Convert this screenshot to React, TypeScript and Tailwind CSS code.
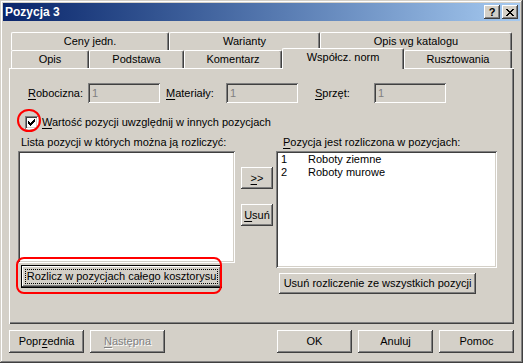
import React from 'react';

const raised =
  'shadow-[inset_-1px_-1px_#404040,inset_1px_1px_#ffffff,inset_-2px_-2px_#808080,inset_2px_2px_#d4d0c8]';
const sunken =
  'shadow-[inset_1px_1px_#808080,inset_-1px_-1px_#ffffff,inset_2px_2px_#404040,inset_-2px_-2px_#d4d0c8]';

function U({ children }: { children: React.ReactNode }) {
  return <span className="underline decoration-1 underline-offset-[2px]">{children}</span>;
}

// small bitmap glyphs (check mark, close cross)
function Pixels({ rows }: { rows: string[] }) {
  const w = rows[0].length;
  const h = rows.length;
  return (
    <svg width={w} height={h} viewBox={`0 0 ${w} ${h}`} shapeRendering="crispEdges">
      {rows.flatMap((r, y) =>
        r.split('').map((c, x) => (c === 'X' ? <rect key={`${x}-${y}`} x={x} y={y} width={1} height={1} fill="#000" /> : null))
      )}
    </svg>
  );
}

const check = ['......X', '.....XX', 'X...XXX', 'XX.XXX.', 'XXXXX..', '.XXX...', '..X....'];
const cross = ['XX....XX', '.XX..XX.', '..XXXX..', '...XX...', '..XXXX..', '.XX..XX.', 'XX....XX'];

function Button({
  children,
  className = '',
  disabled = false,
}: {
  children: React.ReactNode;
  className?: string;
  disabled?: boolean;
}) {
  return (
    <button
      type="button"
      className={`flex items-center justify-center bg-[#d4d0c8] whitespace-nowrap ${raised} ${
        disabled ? 'text-[#808080] [text-shadow:1px_1px_0_#ffffff]' : 'text-black'
      } ${className}`}
    >
      {children}
    </button>
  );
}

function Tab({ label, className = '' }: { label: string; className?: string }) {
  return (
    <div
      className={`flex items-center justify-center bg-[#d4d0c8] border-t border-l border-r border-t-white border-l-white border-r-[#404040] rounded-t-[2px] shadow-[inset_-1px_0_#808080] whitespace-nowrap ${className}`}
    >
      {label}
    </div>
  );
}

function Field() {
  return (
    <div className={`w-[72px] h-[20px] flex items-center pl-[4px] bg-[#d4d0c8] text-[#808080] ${sunken}`}>1</div>
  );
}

export default function App() {
  return (
    <div className="w-[523px] h-[363px] bg-[#d4d0c8] p-[3px] flex flex-col font-['Liberation_Sans',Arial,sans-serif] text-[11px] leading-[13px] text-black select-none shadow-[inset_-1px_-1px_#404040,inset_1px_1px_#d4d0c8,inset_-2px_-2px_#808080,inset_2px_2px_#ffffff]">
      <div className="h-[18px] flex items-center justify-between bg-linear-to-r from-[#0a246a] to-[#a6caf0] px-[2px]">
        <span className="text-white font-bold text-[12px]">Pozycja 3</span>
        <div className="flex gap-[2px]">
          <div className={`w-[16px] h-[14px] flex items-center justify-center bg-[#d4d0c8] font-bold text-[11px] ${raised}`}>
            ?
          </div>
          <div className={`w-[16px] h-[14px] flex items-center justify-center bg-[#d4d0c8] ${raised}`}>
            <Pixels rows={cross} />
          </div>
        </div>
      </div>

      <div className="flex flex-col px-[6px] pt-[11px]">
        <div className="flex h-[18px] px-[2px]">
          <Tab className="w-[158px]" label="Ceny jedn." />
          <Tab className="w-[151px]" label="Warianty" />
          <Tab className="w-[192px]" label="Opis wg katalogu" />
        </div>
        <div className="flex h-[18px] px-[2px]">
          <Tab className="w-[78px]" label="Opis" />
          <Tab className="w-[95px]" label="Podstawa" />
          <Tab className="w-[98px]" label="Komentarz" />
          <Tab className="w-[122px] h-[21px] -mt-[2px] relative z-10 pb-[3px]" label="Współcz. norm" />
          <Tab className="w-[108px]" label="Rusztowania" />
        </div>

        <div className="relative h-[256px] pt-[15px] shadow-[inset_1px_1px_#ffffff,inset_-1px_-1px_#404040,inset_-2px_-2px_#808080]">
          <div className="flex items-center h-[20px] pl-[19px]">
            <span className="w-[60px]">
              <U>R</U>obocizna:
            </span>
            <Field />
            <span className="w-[60px] ml-[6px]">
              <U>M</U>ateriały:
            </span>
            <Field />
            <span className="w-[59px] ml-[17px]">
              <U>S</U>przęt:
            </span>
            <Field />
          </div>

          <div className="flex items-center h-[13px] mt-[13px] pl-[16px]">
            <div className={`w-[13px] h-[13px] bg-white flex items-center justify-center ${sunken}`}>
              <Pixels rows={check} />
            </div>
            <span className="ml-[4px]">
              <U>W</U>artość pozycji uwzględnij w innych pozycjach
            </span>
          </div>

          <div className="flex mt-[7px]">
            <span className="ml-[12px] w-[262px]">Lista pozycji w których można ją rozliczyć:</span>
            <span>
              <U>P</U>ozycja jest rozliczona w pozycjach:
            </span>
          </div>

          <div className="flex items-start mt-[2px] pl-[9px]">
            <div className="w-[217px] flex flex-col">
              <div className={`h-[112px] bg-white ${sunken}`} />
              <div className="mt-[2px] ml-[3px] w-[201px] h-[23px] border border-black">
                <div className={`h-full p-[3px] bg-[#d4d0c8] ${raised}`}>
                  <div className="h-full border border-dotted border-black flex items-center justify-center whitespace-nowrap">
                    Rozlicz w pozycjach całego kosztorysu
                  </div>
                </div>
              </div>
            </div>

            <div className="ml-[6px] w-[32px] flex flex-col pt-[16px]">
              <Button className="h-[22px]">
                <U>&gt;</U>&gt;
              </Button>
              <Button className="h-[22px] mt-[15px]">
                <U>U</U>suń
              </Button>
            </div>

            <div className="ml-[3px] w-[221px] flex flex-col">
              <div className={`h-[117px] bg-white p-[2px] ${sunken}`}>
                {[
                  ['1', 'Roboty ziemne'],
                  ['2', 'Roboty murowe'],
                ].map(([n, name]) => (
                  <div key={n} className="flex h-[13px] pl-[3px]">
                    <span className="w-[27px]">{n}</span>
                    <span>{name}</span>
                  </div>
                ))}
              </div>
              <Button className="mt-[5px] ml-[3px] w-[197px] h-[21px]">Usuń rozliczenie ze wszystkich pozycji</Button>
            </div>
          </div>

          {/* red annotations */}
          <div className="absolute left-[8px] top-[41px] w-[24px] h-[23px] border-2 border-[#ff0000] rounded-full" />
          <div className="absolute left-[7px] top-[189px] w-[206px] h-[37px] border-2 border-[#ff0000] rounded-[8px]" />
        </div>

        <div className="flex justify-between h-[23px] mt-[6px]">
          <div className="flex">
            <Button className="w-[75px] h-[23px]">
              Popr<U>z</U>ednia
            </Button>
            <Button className="w-[75px] h-[23px] ml-[6px]" disabled>
              <U>N</U>astępna
            </Button>
          </div>
          <div className="flex">
            <Button className="w-[75px] h-[23px]">OK</Button>
            <Button className="w-[75px] h-[23px] ml-[6px]">Anuluj</Button>
            <Button className="w-[75px] h-[23px] ml-[6px]">Pomoc</Button>
          </div>
        </div>
      </div>
    </div>
  );
}
